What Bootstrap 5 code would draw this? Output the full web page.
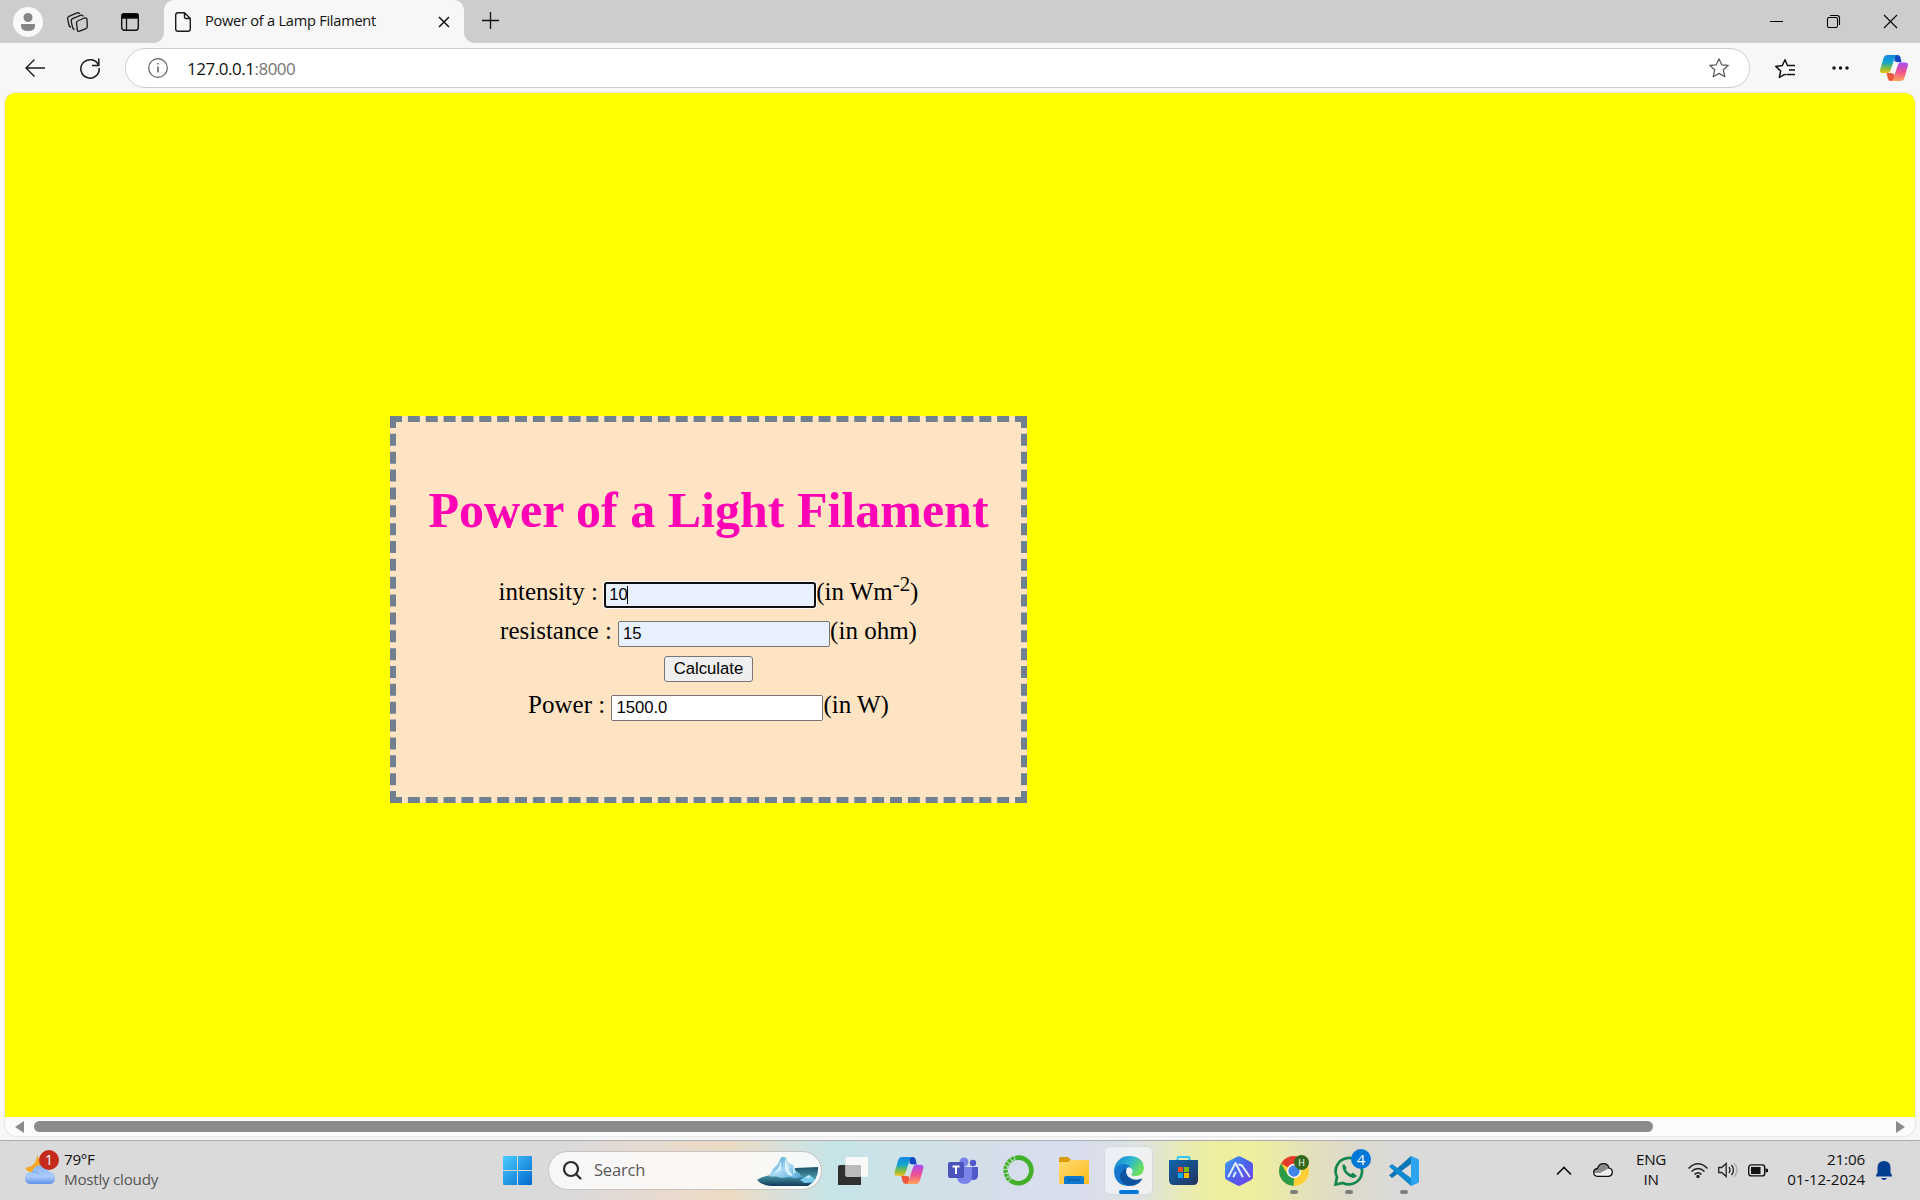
<!DOCTYPE html>
<html lang="en">
<head>
<meta charset="utf-8">
<title>Power of a Lamp Filament</title>
<link href="https://cdn.jsdelivr.net/npm/bootstrap@5.3.0/dist/css/bootstrap.min.css" rel="stylesheet">
<style>
body{width:1920px;height:1200px;overflow:hidden;background:#f7f7f7;font-family:"Open Sans","Noto Sans",sans-serif;color:#111;line-height:1}
svg{display:block;flex:none;overflow:visible}
.slot{display:flex;align-items:center;justify-content:center;flex:none}
.tabstrip{height:43px;background:#cdcdcd}
.avatar{width:30px;height:30px;border-radius:50%;background:#f9f9f9}
.apptab{width:300px;height:43px;background:#f7f7f7;border-radius:10px 10px 0 0;position:relative;padding-left:11px}
.apptab::before,.apptab::after{content:"";position:absolute;bottom:0;width:10px;height:10px}
.apptab::before{left:-10px;background:radial-gradient(circle at 0 0,transparent 9.5px,#f7f7f7 10px)}
.apptab::after{right:-10px;background:radial-gradient(circle at 100% 0,transparent 9.5px,#f7f7f7 10px)}
.tabname{font-size:14.6px;letter-spacing:-.25px;white-space:nowrap;margin-left:14px;width:232px;position:relative;top:-1px}
.toolbar{height:50px}
.address{width:1625px;height:40px;border:1px solid #cfcfcf;border-radius:20px;background:#fff;flex:none}
.url{font-size:17px;letter-spacing:-.48px;margin-left:19px;white-space:nowrap}
.url span{color:#767676}
.viewport{margin:0 5px;width:1910px;height:1043px;border-radius:10px 10px 12px 12px;overflow:hidden;background:#fcfcfc;box-shadow:0 0 2px #c4c4c4}
.page{height:1024px;background:#ff0;padding:323px 0 0 385px}
.calc{width:637px;height:387px;border:6px dashed slategray;background:bisque;padding-top:59px;font:25px "Liberation Serif","Times New Roman",serif;color:#000;text-align:center}
.calc h1{font:bold 50px/58px "Liberation Serif",serif;color:#ff00b4;margin:0 0 33px;white-space:nowrap}
.line{height:39px;line-height:39px;white-space:nowrap}
.line sup{font-size:20.8px;vertical-align:super;top:0;line-height:0}
.field{display:inline-block;width:212px;height:26px;border:1px solid #767676;border-radius:2px;padding:0 0 0 4px;font:16.67px/24px "Liberation Sans",Arial,sans-serif;text-align:left;color:#000;background:#fff}
.filled{background:#e8f0fe}
.focused{border:2px solid #101010;border-radius:3px;box-shadow:0 0 0 1px #fff;line-height:22px;padding-left:3px}
.caret{display:inline-block;width:1px;height:18px;background:#000;vertical-align:-4px;margin-left:-1px}
.btnrow{height:35px;padding-top:6px}
.calcbtn{display:block;margin:0 auto;width:89px;height:26px;border:1px solid #767676;border-radius:3px;background:#efefef;font:16.67px/22px "Liberation Sans",Arial,sans-serif;color:#000;padding:0}
.scroller{height:19px}
.thumb{width:1619px;height:11px;border-radius:6px;background:#8b8b8b;margin-left:9px;margin-right:243px}
.taskbar{height:60px;margin-top:4px;border-top:1px solid #aaacae;background:linear-gradient(90deg,#dadada 0,#dadada 570px,#e5d9d3 630px,#eadbcb 690px,#ecdbc3 730px,#d5e1dc 790px,#c6e4e8 835px,#cee2e8 900px,#d5deea 1000px,#dadeee 1080px,#dde2e1 1140px,#e8eab8 1180px,#eeef9e 1215px,#eeef9f 1255px,#e4e0bb 1310px,#dddacb 1350px,#dadada 1400px,#dadada 100%)}
.weather{width:494px;padding-left:24px}
.t15{font-size:15.2px;line-height:20px;letter-spacing:-.25px;white-space:nowrap;margin-top:-3px}
.searchbox{width:274px;height:39px;border-radius:20px;background:rgba(255,255,255,.78);border:1px solid #c6c3c1;padding-left:14px}
.bubble{position:absolute;border-radius:50%;width:20px;height:20px;color:#fff;text-align:center;font-size:14px;line-height:20px}
.app{width:55px;height:59px;position:relative}
.app.active::before{content:"";position:absolute;inset:5px 3px;border:1px solid #d5d9e1;border-radius:6px;background:linear-gradient(90deg,#eceef7,#eff2ef)}
.app.run::after{content:"";position:absolute;left:24px;top:49px;width:8px;height:4px;border-radius:2px;background:#7e7e7c}
.app.active::after{content:"";position:absolute;left:18px;top:49px;width:20px;height:4px;border-radius:2px;background:#0078d7}
</style>
<script src="https://cdn.jsdelivr.net/npm/bootstrap@5.3.0/dist/js/bootstrap.bundle.min.js"></script>
</head>
<body>
<svg width="0" height="0" class="position-absolute">
<defs>
<linearGradient id="cpA" x1="0" y1="0" x2="0" y2="1"><stop stop-color="#1786e0"/><stop offset=".4" stop-color="#12a5cf"/><stop offset=".68" stop-color="#70b950"/><stop offset="1" stop-color="#f2c00c"/></linearGradient>
<linearGradient id="cpB" x1="0" y1="0" x2="0" y2="1"><stop stop-color="#a64df0"/><stop offset=".5" stop-color="#ee5191"/><stop offset="1" stop-color="#ffa45c"/></linearGradient>
<linearGradient id="gWin" x1="0" y1="0" x2="1" y2="1"><stop stop-color="#4cccff"/><stop offset="1" stop-color="#0069ce"/></linearGradient>
<linearGradient id="gCloud" x1="0" y1="0" x2="0" y2="1"><stop stop-color="#8bb5f5"/><stop offset=".6" stop-color="#abccfb"/><stop offset="1" stop-color="#5f93ea"/></linearGradient>
<linearGradient id="gFold" x1="0" y1="0" x2="1" y2="1"><stop stop-color="#ffdc70"/><stop offset="1" stop-color="#ffba1e"/></linearGradient>
<linearGradient id="gEdge" x1="0" y1="0" x2="1" y2=".5"><stop stop-color="#1479c9"/><stop offset=".5" stop-color="#28b3d8"/><stop offset="1" stop-color="#6be05b"/></linearGradient>
<linearGradient id="gStore" x1="0" y1="0" x2="1" y2="1"><stop stop-color="#0d66ae"/><stop offset="1" stop-color="#24335d"/></linearGradient>
<linearGradient id="gHex" x1="0" y1="0" x2="1" y2="1"><stop stop-color="#38a6ee"/><stop offset=".5" stop-color="#4c61ee"/><stop offset="1" stop-color="#7a3fe8"/></linearGradient>
<linearGradient id="gIce" x1="0" y1="0" x2="1" y2="1"><stop stop-color="#3f98cc"/><stop offset=".5" stop-color="#a9daf3"/><stop offset="1" stop-color="#4aa3d8"/></linearGradient>
<linearGradient id="gSea" x1="0" y1="0" x2="0" y2="1"><stop stop-color="#1c5269"/><stop offset=".5" stop-color="#428f9f"/><stop offset="1" stop-color="#133a5c"/></linearGradient>
<symbol id="copilot" viewBox="0 0 28 26"><path d="M14 0h3.500q2.200 0 2.900 2.300L21.600 7.300h-3q-2.300 0-4-1z" fill="#1546c4"/><path d="M7.500 0H17.500q-2 .3-2.800 3L10.400 15.800q-.8 2.300-3.400 2.300H3Q-.6 18.100.2 14.500L3.600 3Q4.500 0 7.500 0z" fill="url(#cpA)"/><path d="M14 26H11q-2.500 0-3.100-2.300L6.500 18h2.500q3 0 5 1z" fill="#ee5639"/><path d="M20.500 26H10.800q2-.3 2.800-3l4.300-13.200q.8-2.300 3.400-2.300H25q3.600 0 2.800 3.600L24.400 23q-.9 3-3.900 3z" fill="url(#cpB)"/></symbol>
</defs>
</svg>

<header class="tabstrip d-flex align-items-center">
  <div class="slot" style="width:56px"><div class="avatar slot"><svg width="16" height="18"><circle cx="8" cy="4.500" r="4.500" fill="#858585"/><path d="M1 11h14v1.500Q15 18 8 18T1 12.500z" fill="#858585"/></svg></div></div>
  <div class="slot" style="width:43px"><svg width="21" height="20" fill="none" stroke="#1b1b1b" stroke-width="1.300" stroke-linejoin="round"><path d="M4 15Q2.300 15 2 13.500L.7 7Q.4 5 2 4.300L10 .9Q12 .3 12.600 2M7.500 17.500Q6 17.300 5.600 15.500L4.200 9.300Q3.900 7.500 5.500 6.700L14 3.200Q15.700 2.700 16.400 4.500M11.500 8.500 17.500 6Q19.700 5.500 20 7.300L20.300 14Q20.400 16 19 16.600L12.600 19.200Q10.700 19.900 10.300 18L9.500 11Q9.500 9.300 11.500 8.500z"/></svg></div>
  <div class="slot" style="width:62px"><svg width="18" height="18"><rect x=".7" y=".7" width="16.600" height="16.600" rx="2.700" fill="none" stroke="#111" stroke-width="1.400"/><path d="M.7 5V3Q.7.7 3 .7h12Q17.300.7 17.300 3v2zM5.500 5v12" fill="#000" stroke="#111" stroke-width="1.300"/></svg></div>
  <div class="apptab d-flex align-items-center" style="margin-left:3px">
    <svg width="16" height="20" fill="none" stroke="#1b1b1b" stroke-width="1.400" stroke-linejoin="round"><path d="M3 .7h6.500L15.300 6.500V17Q15.300 19.300 13 19.300H3Q.7 19.300.7 17V3Q.7.7 3 .7zM9.500.7V5Q9.500 6.500 11 6.500h4.300"/></svg>
    <div class="tabname">Power of a Lamp Filament</div>
    <svg width="10" height="10" style="margin-left:2px" stroke="#111" stroke-width="1.500"><path d="M0 0 10 10M10 0 0 10"/></svg>
  </div>
  <svg width="17" height="17" style="margin-left:18px;margin-top:-2px" stroke="#111" stroke-width="1.300"><path d="M8.500 0v17M0 8.500h17"/></svg>
  <div class="d-flex align-items-center ms-auto" style="margin-right:1px">
    <div class="slot" style="width:57px"><svg width="13" height="2"><path d="M0 .5h13" stroke="#000"/></svg></div>
    <div class="slot" style="width:57px"><svg width="13" height="13" fill="none" stroke="#000" stroke-width="1.100"><rect x=".5" y="2.500" width="10" height="10" rx="1.500"/><path d="M3 .5h7Q12.500.5 12.500 3v7"/></svg></div>
    <div class="slot" style="width:57px"><svg width="13" height="13" stroke="#000" stroke-width="1.100"><path d="M0 0 13 13M13 0 0 13"/></svg></div>
  </div>
</header>

<nav class="toolbar d-flex align-items-center">
  <div class="slot" style="width:69px"><svg width="20" height="18" fill="none" stroke="#1b1b1b" stroke-width="1.400"><path d="M20 9H1M9.500.5 1 9l8.500 8.500"/></svg></div>
  <div class="slot" style="width:42px"><svg width="20" height="20" fill="none" stroke="#1b1b1b" stroke-width="1.500"><path d="M18.600 7.500A9.200 9.200 0 1 0 19.200 10M18.800.6v6.900H12"/></svg></div>
  <div class="address d-flex align-items-center" style="margin-left:14px">
    <svg width="20" height="20" style="margin-left:22px" fill="none" stroke="#606060" stroke-width="1.200"><circle cx="10" cy="10" r="9.300"/><path d="M10 8.500v6M10 5v1.600" stroke-width="1.500"/></svg>
    <div class="url">127.0.0.1<span>:8000</span></div>
    <svg class="ms-auto" width="20" height="20" style="margin-right:20px" fill="none" stroke="#606060" stroke-width="1.300" stroke-linejoin="round"><path d="m10 .8 2.700 6 6.500.7-4.900 4.300 1.500 6.900-5.800-3.300-5.800 3.300 1.500-6.900L.8 7.500l6.500-.7z"/></svg>
  </div>
  <div class="slot" style="width:70px"><svg width="20" height="19" fill="none" stroke="#111" stroke-width="1.500" stroke-linejoin="round"><path d="M12.500 6.500 10 .7 7.300 6.500.7 7.500l5 4.500-1.400 6.300 5.500-3M11.500 15 10 16M12 6.500h8M14 11h6M12 15.500h8"/></svg></div>
  <div class="slot" style="width:40px"><svg width="17" height="4" fill="#111"><circle cx="2" cy="2" r="1.700"/><circle cx="8.500" cy="2" r="1.700"/><circle cx="15" cy="2" r="1.700"/></svg></div>
  <div class="slot ps-2" style="width:60px"><svg width="28" height="26"><use href="#copilot"/></svg></div>
</nav>

<main class="viewport">
  <div class="page">
    <div class="calc">
      <h1>Power of a Light Filament</h1>
      <div class="line">intensity : <span class="field filled focused">10<i class="caret"></i></span>(in Wm<sup>-2</sup>)</div>
      <div class="line">resistance : <span class="field filled">15</span>(in ohm)</div>
      <div class="btnrow"><button type="button" class="calcbtn">Calculate</button></div>
      <div class="line">Power : <span class="field">1500.0</span>(in W)</div>
    </div>
  </div>
  <div class="scroller d-flex align-items-center">
    <svg width="10" height="12" style="margin-left:10px"><path d="M9 0V12L0 6z" fill="#8b8b8b"/></svg>
    <div class="thumb flex-shrink-0"></div>
    <svg width="10" height="12" style="margin-right:9px"><path d="M0 0V12L9 6z" fill="#8b8b8b"/></svg>
  </div>
</main>

<footer class="taskbar d-flex align-items-center">
  <div class="weather d-flex align-items-center">
    <div class="position-relative">
      <svg width="32" height="32" style="margin-top:-2px"><path d="M13 1Q13 12 1 14q5 7 13 3Q20 10 13 1z" fill="#f5a623"/><path d="M7 30Q1 30 1 24t7-6Q10 11 17 11q7 0 8 7 6 0 6 6t-6 6z" fill="url(#gCloud)"/><path d="M8 18q5-1 7 3" fill="none" stroke="#7aa5ea"/></svg>
      <div class="bubble" style="left:15px;top:-6px;background:#c42b1c">1</div>
    </div>
    <div class="t15" style="margin-left:8px;margin-top:-4px"><div>79°F</div><div style="color:#555">Mostly cloudy</div></div>
  </div>
  <div class="slot" style="width:46px"><svg width="29" height="29" fill="url(#gWin)"><path d="M1 0h13v14H0V1q0-1 1-1zM15 0h13q1 0 1 1v13H15zM0 15h14v14H1q-1 0-1-1zM15 15h14v13q0 1-1 1H15z"/></svg></div>
  <div class="searchbox d-flex align-items-center" style="margin-left:8px">
    <svg width="19" height="19" fill="none" stroke="#2a2a2a" stroke-width="2.200" stroke-linecap="round"><circle cx="8" cy="8" r="7"/><path d="m13 13 4.500 4.500"/></svg>
    <div style="font-size:16.500px;letter-spacing:-.2px;color:#5a5a5a;margin-left:12px">Search</div>
    <svg width="62" height="31" class="ms-auto" style="margin-right:2px;margin-top:2px"><path d="M38 12 61 11q1 12-10 19H14Q4 29 0 24q6-4 14-5h24z" fill="url(#gSea)"/><path d="M12 20.500 16 13l5-5 3-6.500Q26 .5 28.500 1.500L31 6.500 36 9l2.500 6 4 2.500L45 21l-7 1.500-6-1.500-7 1-6-1.500z" fill="url(#gIce)"/><path d="m28 3 3 5 1 6 4 6-5-1-3-5zM24 5l-3 8-5 5 8-4z" fill="#d7f2ff"/><path d="m36 10 3 6-3 2z" fill="#bfe6fa"/><path d="m43 24 5-3 4-2.500 2.500 2 4 3-3 3-8 .5z" fill="#79c9ed"/><path d="m48 22 4-2.500 2 2.500z" fill="#c9ebfb"/></svg>
  </div>
  <div class="d-flex" style="margin-left:4px">
    <div class="app slot"><svg width="31" height="28"><path d="M0 10q0-2 2-2h21v20H0z" fill="#30302f"/><rect x="7.500" y="0" width="22.500" height="20" rx="2" fill="#f9f9f8"/><path d="M7.500 8H23v12H9q-1.500 0-1.500-2z" fill="#bbb"/></svg></div>
    <div class="app slot"><svg width="30" height="27"><use href="#copilot"/></svg></div>
    <div class="app slot"><svg width="31" height="27"><circle cx="16" cy="5" r="4.500" fill="#7b83eb"/><circle cx="25" cy="6" r="3.200" fill="#5059c9"/><path d="M20 10h10v8q0 5-5 5t-5-4z" fill="#5059c9"/><path d="M9 10h15v9q0 8-7.500 8T9 19z" fill="#7b83eb"/><rect x="0" y="5" width="16" height="16" rx="2" fill="#4b53bc"/><path d="M4.500 9.500h7M8 9v8" stroke="#fff" stroke-width="2"/></svg></div>
    <div class="app slot"><svg width="31" height="31" fill="none" stroke="#43b02a"><path d="M14 2.700A12.800 12.800 0 1 1 9 26.400" stroke-width="4.600"/><path d="M9.500 26.800A12.800 12.800 0 0 1 14.500 2.700" stroke-width="4.600" stroke-dasharray="3 .8"/><path d="M7.500 24A12 12 0 0 1 13 4" stroke="#dce7ea" stroke-width=".8" stroke-dasharray="3 2"/></svg></div>
    <div class="app slot"><svg width="30" height="27"><path d="M0 6V2Q0 0 2 0h7l3 3h-1v4z" fill="#d99c09"/><path d="M0 5h9l3-2h17q1 0 1 1.500V27H1q-1 0-1-1.500z" fill="url(#gFold)"/><path d="M5 27v-6q0-2 2-2h16q2 0 2 2v6z" fill="#1079cd"/><path d="M9 23h12" stroke="#075aa5" stroke-width="1.300"/></svg></div>
    <div class="app slot active"><svg class="position-relative" width="30" height="30"><path d="M0 15A15 15 0 0 1 15 0q14 0 15 12-1 8-8 8-4 0-5-1 4-4-1-8Q5 6 0 15z" fill="url(#gEdge)"/><path d="M0 15Q3 7 11 8q4 .5 6 4-4-2-5.500 2-1 5 3.500 16Q1 30 0 15z" fill="#1578cf"/><path d="M12.500 12q-2 8 5.500 11 5 1.500 10.500-.5-4 7.500-12.500 7.500Q6 28 6 20q1-6 6.500-8z" fill="#1053a0"/></svg></div>
    <div class="app slot"><svg width="29" height="29"><path d="M8.500 6V3Q8.500 1 10 1h9q1.500 0 1.500 2v3" fill="none" stroke="#31c4f2" stroke-width="2"/><path d="M0 4h29v20q0 5-5 5H5q-5 0-5-5z" fill="url(#gStore)"/><path d="M9 11h5v5H9z" fill="#f25022"/><path d="M15 11h5v5h-5z" fill="#7fba00"/><path d="M9 17h5v5H9z" fill="#00a4ef"/><path d="M15 17h5v5h-5z" fill="#ffb900"/></svg></div>
    <div class="app slot"><svg width="28" height="30"><path d="M12 .7q2-1 4 0l10 5.300q2 1 2 3v12q0 2-2 3L16 29.300q-2 1-4 0L2 24q-2-1-2-3V9q0-2 2-3z" fill="url(#gHex)"/><path d="m3.500 20.500 7-13.500 7 13.500M14 8.500l3 1 7.500 11M8.500 20.500l2-4" fill="none" stroke="#e4ecff" stroke-width="2" stroke-linecap="round" stroke-linejoin="round"/></svg></div>
    <div class="app slot run"><svg width="30" height="30"><circle cx="15" cy="15" r="15" fill="#ffcd35"/><path d="M15 15 2 7.500A15 15 0 0 1 28 7.500H15z" fill="#e33b2e"/><path d="M2 7.500 9 19l6 3.500L14.500 30A15 15 0 0 1 2 7.500z" fill="#2c9c4b"/><circle cx="15" cy="15" r="7.200" fill="#fff"/><circle cx="15" cy="15" r="5.700" fill="#4285e8"/></svg><div class="bubble" style="left:28px;top:14px;width:15px;height:15px;background:#33691e;font-size:9px;line-height:15px">H</div></div>
    <div class="app slot run"><svg width="30" height="30" fill="none" stroke="#14874f" stroke-width="2.700"><path d="M1.500 28.500 3 21A13.200 13.200 0 1 1 9 27z"/><path d="m10 9-1 .5Q9 15 14 19t8 1l-3-2.500-2.500 1.500Q12 16 11 13.500L12 12z" fill="#14874f" stroke-width="1.300"/></svg><div class="bubble" style="left:30px;top:8px;background:#0078d7;font-size:15px">4</div></div>
    <div class="app slot run"><svg width="30" height="30"><path d="M22 8 3 22 0 19.500 22 0z" fill="#0b74b8"/><path d="M22 22 3 8 0 10.500 22 30z" fill="#1089cf"/><path d="m22 0 7 3q1 .5 1 1.500v21q0 1-1 1.500l-7 3z" fill="#2da4f1"/></svg></div>
  </div>
  <div class="d-flex align-items-center ms-auto">
    <svg width="14" height="8" fill="none" stroke="#111" stroke-width="1.700"><path d="m0 7.500 7-7 7 7"/></svg>
    <svg width="20" height="14" style="margin-left:22px;margin-top:-2px"><path d="M4.500 13.400Q.7 13 .7 9.500T4.500 5.500Q6 .7 10.500.7T16 5.200q3.300.5 3.300 4T15.500 13.400z" fill="#f0f0f0"/><path d="M4.500 5.500Q6 .7 10.500.7T16 5.200L7 10 1 10Q1 6 4.500 5.500z" fill="#8c8c8c"/><path d="M4.500 13.400Q.7 13 .7 9.500T4.500 5.500Q6 .7 10.500.7T16 5.200q3.300.5 3.300 4T15.500 13.400z" fill="none" stroke="#111" stroke-width="1.300"/></svg>
    <div class="t15 text-center" style="width:30px;margin-left:23px">ENG<br>IN</div>
    <svg width="20" height="15" style="margin-left:22px;margin-top:-1px" fill="none" stroke="#222" stroke-width="1.500"><path d="M.5 5.500Q10-4 19.500 5.500M3.500 8.500q6.500-6 13 0M6.500 11.500q3.500-3.500 7 0"/><circle cx="10" cy="13.500" r="1" fill="#222"/></svg>
    <svg width="20" height="16" style="margin-left:10px;margin-top:-1px" fill="none" stroke="#222" stroke-width="1.300"><path d="M.7 5.500v5h3l4.500 4V1.500l-4.500 4zM11 5q2 3 0 6M13.500 3q4 5 0 10"/><path d="M16 .8q6 7 0 14.400" stroke="#aaa"/></svg>
    <svg width="20" height="13" style="margin-left:10px;margin-top:-1px"><rect x=".7" y=".9" width="16" height="11" rx="2.500" fill="none" stroke="#111" stroke-width="1.400"/><path d="M3 3h9.500v7H3zM17.500 4.500 20 5v3l-2.500.5z" fill="#111"/></svg>
    <div class="t15 text-end" style="width:80px;margin-left:17px;letter-spacing:-.15px">21:06<br>01-12-2024</div>
    <svg width="16" height="19" style="margin-left:11px;margin-right:28px"><path d="M8 0q6 0 6.500 6v5.500L16 14.500v1H0v-1l1.500-3V6Q2 0 8 0zM5 17h6q-1 2-3 2t-3-2z" fill="#003e92"/></svg>
  </div>
</footer>
</body>
</html>
